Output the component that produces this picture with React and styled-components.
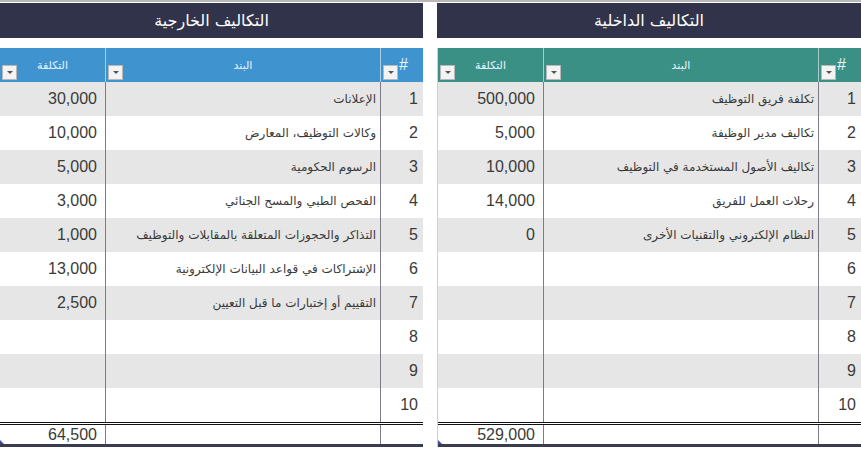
import React from 'react';
import styled, { createGlobalStyle } from 'styled-components';

const GlobalStyle = createGlobalStyle`
  body {
    margin: 0;
    background: #ffffff;
    font-family: "Liberation Sans", "DejaVu Sans", sans-serif;
  }
`;

const Page = styled.div`
  direction: rtl;
  display: flex;
  gap: 14px;
  border-top: 2px solid #b9b9b9;
  padding-top: 1px;
`;

const Panel = styled.section`
  width: ${props => props.$width}px;
  display: flex;
  flex-direction: column;
`;

const TitleBar = styled.div`
  height: 35px;
  background: #30334a;
  color: #ffffff;
  font-family: "DejaVu Sans", sans-serif;
  font-size: 16px;
  display: flex;
  align-items: center;
  justify-content: center;
  margin-bottom: 10px;
`;

const Table = styled.div`
  display: flex;
  flex-direction: column;
  border-left: ${props => (props.$edge ? '1px solid #cfcfcf' : 'none')};
`;

const Row = styled.div`
  display: grid;
  grid-template-columns: 43px 275px 1fr;
  height: ${props => props.$height || 34}px;
  background: ${props => props.$bg || '#ffffff'};
`;

const HeadCell = styled.div`
  position: relative;
  display: flex;
  align-items: center;
  justify-content: center;
  color: #e9f4ff;
  font-family: "DejaVu Sans", sans-serif;
  font-size: 11px;
  border-left: ${props => (props.$sep ? '1px solid rgba(255,255,255,0.55)' : 'none')};
`;

const Hash = styled.span`
  position: absolute;
  left: 18px;
  top: 8px;
  font-family: "Liberation Sans", sans-serif;
  font-size: 16px;
  color: #eef6ff;
`;

const Dropdown = styled.span`
  position: absolute;
  left: 2px;
  bottom: 2px;
  width: 13px;
  height: 13px;
  background: #f3f3f3;
  border: 1px solid #b8b8b8;
  display: flex;
  align-items: center;
  justify-content: center;

  &::after {
    content: '';
    border-left: 3px solid transparent;
    border-right: 3px solid transparent;
    border-top: 3px solid #555;
  }
`;

const Cell = styled.div`
  position: relative;
  display: flex;
  align-items: ${props => (props.$bottom ? 'flex-end' : 'center')};
  justify-content: flex-start;
  padding: ${props => props.$pad || '0 4px'};
  color: #3a3a3a;
  font-size: ${props => (props.$arabic ? '12px' : '16px')};
  font-family: ${props => (props.$arabic ? '"DejaVu Sans", sans-serif' : '"Liberation Sans", sans-serif')};
  line-height: 1;
  white-space: nowrap;
  overflow: hidden;
  border-left: ${props => (props.$sep ? '1px solid #7c7c86' : 'none')};
`;

const TotalRow = styled(Row)`
  border-top: 3px double #111;
  border-bottom: 3px solid #3a3c4f;
`;

const Corner = styled.span`
  position: absolute;
  left: 0;
  bottom: 0;
  width: 0;
  height: 0;
  border-bottom: 4px solid #3b4a9a;
  border-right: 4px solid transparent;
`;

const external = [
  ['الإعلانات', '30,000'],
  ['وكالات التوظيف، المعارض', '10,000'],
  ['الرسوم الحكومية', '5,000'],
  ['الفحص الطبي والمسح الجنائي', '3,000'],
  ['التذاكر والحجوزات المتعلقة بالمقابلات والتوظيف', '1,000'],
  ['الإشتراكات في قواعد البيانات الإلكترونية', '13,000'],
  ['التقييم أو إختبارات ما قبل التعيين', '2,500'],
];

const internal = [
  ['تكلفة فريق التوظيف', '500,000'],
  ['تكاليف مدير الوظيفة', '5,000'],
  ['تكاليف الأصول المستخدمة في التوظيف', '10,000'],
  ['رحلات العمل للفريق', '14,000'],
  ['النظام الإلكتروني والتقنيات الأخرى', '0'],
];

function CostTable({ title, items, total, headColor, width, edge }) {
  const rows = Array.from({ length: 10 }, (_, i) => items[i] || ['', '']);

  return (
    <Panel $width={width}>
      <TitleBar>{title}</TitleBar>
      <Table $edge={edge}>
        <Row $bg={headColor}>
          <HeadCell $sep>
            <Hash>#</Hash>
            <Dropdown />
          </HeadCell>
          <HeadCell $sep>
            البند
            <Dropdown />
          </HeadCell>
          <HeadCell>
            التكلفة
            <Dropdown />
          </HeadCell>
        </Row>
        {rows.map(([name, cost], i) => (
          <Row key={i} $bg={i % 2 === 0 ? '#e6e6e6' : '#ffffff'}>
            <Cell $sep $pad="0 5px">{i + 1}</Cell>
            <Cell $sep $arabic>{name}</Cell>
            <Cell $pad="0 8px">{cost}</Cell>
          </Row>
        ))}
        <TotalRow $height={19}>
          <Cell $sep />
          <Cell $sep />
          <Cell $bottom $pad="0 8px 1px">
            {total}
            <Corner />
          </Cell>
        </TotalRow>
      </Table>
    </Panel>
  );
}

export default function App() {
  return (
    <>
      <GlobalStyle />
      <Page>
        <CostTable
          title="التكاليف الداخلية"
          items={internal}
          total="529,000"
          headColor="#3a9084"
          width={424}
          edge
        />
        <CostTable
          title="التكاليف الخارجية"
          items={external}
          total="64,500"
          headColor="#3f93cf"
          width={423}
        />
      </Page>
    </>
  );
}
